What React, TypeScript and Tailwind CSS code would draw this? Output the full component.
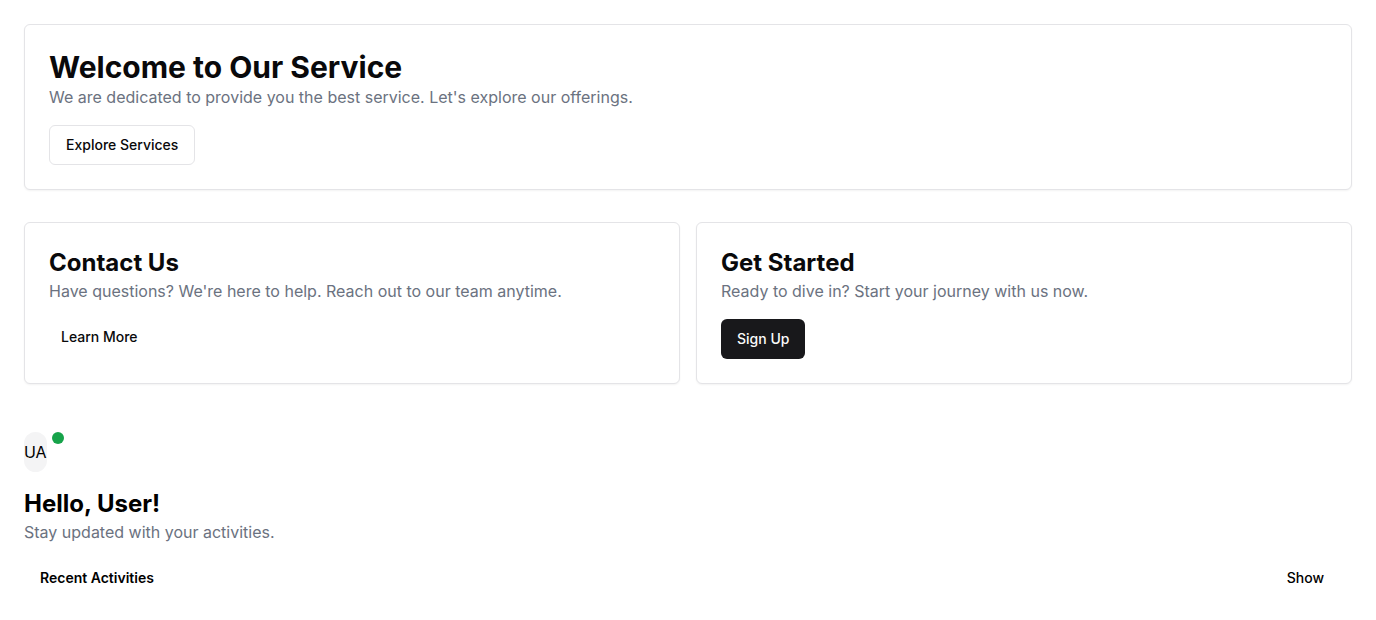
import type { ReactNode } from "react";

function Card({ children }: { children: ReactNode }) {
  return (
    <section className="rounded-md border border-zinc-200 bg-white p-6 text-[#09090b] shadow-xs">
      {children}
    </section>
  );
}

export default function App() {
  return (
    <main className="p-6 font-['Inter',sans-serif] text-base text-black">
      <Card>
        <h1 className="text-3xl font-bold">Welcome to Our Service</h1>
        <p className="text-[#6b7280]">
          We are dedicated to provide you the best service. Let's explore our offerings.
        </p>
        <button
          type="button"
          className="mt-4 inline-flex h-10 items-center justify-center rounded-md border border-zinc-200 bg-white px-4 text-sm font-medium"
        >
          Explore Services
        </button>
      </Card>

      <div className="mt-8 grid grid-cols-2 gap-4">
        <Card>
          <h2 className="text-2xl font-bold">Contact Us</h2>
          <p className="text-[#6b7280]">
            Have questions? We're here to help. Reach out to our team anytime.
          </p>
          <button
            type="button"
            className="mt-4 inline-flex h-9 items-center justify-center rounded-md px-3 text-sm font-medium"
          >
            Learn More
          </button>
        </Card>
        <Card>
          <h2 className="text-2xl font-bold">Get Started</h2>
          <p className="text-[#6b7280]">Ready to dive in? Start your journey with us now.</p>
          <button
            type="button"
            className="mt-4 inline-flex h-10 items-center justify-center rounded-md bg-zinc-900 px-4 text-sm font-medium text-zinc-50"
          >
            Sign Up
          </button>
        </Card>
      </div>

      <section className="mt-12">
        <div className="flex w-10 items-start justify-between">
          <span className="flex h-10 items-center justify-center rounded-full bg-zinc-100">UA</span>
          <span className="size-3 rounded-full bg-[#16a34a]" />
        </div>
        <h2 className="mt-4 text-2xl font-bold">Hello, User!</h2>
        <p className="text-[#6b7280]">Stay updated with your activities.</p>
        <div className="mt-4 flex items-center justify-between px-4">
          <h3 className="text-sm font-semibold">Recent Activities</h3>
          <button
            type="button"
            className="inline-flex h-9 items-center justify-center rounded-md px-3 text-sm font-medium"
          >
            Show
          </button>
        </div>
      </section>
    </main>
  );
}
